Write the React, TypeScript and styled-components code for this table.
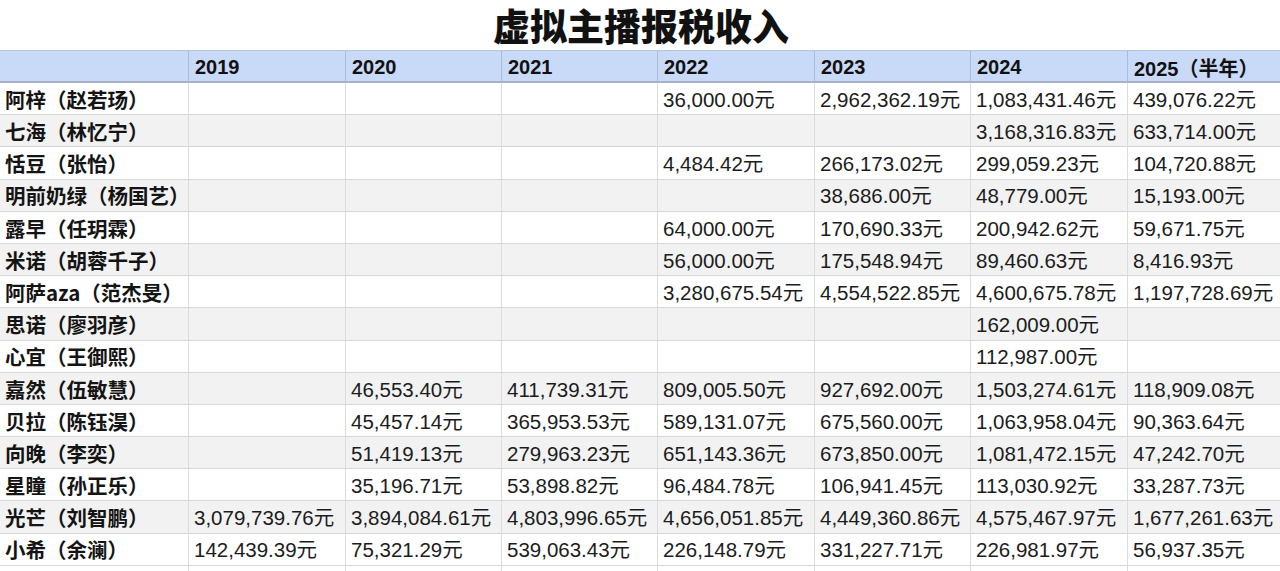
import React from 'react';
import styled, { createGlobalStyle } from 'styled-components';

const years = ['2019', '2020', '2021', '2022', '2023', '2024', '2025（半年）'];

const rows: Array<[string, string[]]> = [
	['阿梓（赵若玚）', ['', '', '', '36,000.00元', '2,962,362.19元', '1,083,431.46元', '439,076.22元']],
	['七海（林忆宁）', ['', '', '', '', '', '3,168,316.83元', '633,714.00元']],
	['恬豆（张怡）', ['', '', '', '4,484.42元', '266,173.02元', '299,059.23元', '104,720.88元']],
	['明前奶绿（杨国艺）', ['', '', '', '', '38,686.00元', '48,779.00元', '15,193.00元']],
	['露早（任玥霖）', ['', '', '', '64,000.00元', '170,690.33元', '200,942.62元', '59,671.75元']],
	['米诺（胡蓉千子）', ['', '', '', '56,000.00元', '175,548.94元', '89,460.63元', '8,416.93元']],
	['阿萨aza（范杰旻）', ['', '', '', '3,280,675.54元', '4,554,522.85元', '4,600,675.78元', '1,197,728.69元']],
	['思诺（廖羽彦）', ['', '', '', '', '', '162,009.00元', '']],
	['心宜（王御熙）', ['', '', '', '', '', '112,987.00元', '']],
	['嘉然（伍敏慧）', ['', '46,553.40元', '411,739.31元', '809,005.50元', '927,692.00元', '1,503,274.61元', '118,909.08元']],
	['贝拉（陈钰淏）', ['', '45,457.14元', '365,953.53元', '589,131.07元', '675,560.00元', '1,063,958.04元', '90,363.64元']],
	['向晚（李奕）', ['', '51,419.13元', '279,963.23元', '651,143.36元', '673,850.00元', '1,081,472.15元', '47,242.70元']],
	['星瞳（孙正乐）', ['', '35,196.71元', '53,898.82元', '96,484.78元', '106,941.45元', '113,030.92元', '33,287.73元']],
	['光芒（刘智鹏）', ['3,079,739.76元', '3,894,084.61元', '4,803,996.65元', '4,656,051.85元', '4,449,360.86元', '4,575,467.97元', '1,677,261.63元']],
	['小希（余澜）', ['142,439.39元', '75,321.29元', '539,063.43元', '226,148.79元', '331,227.71元', '226,981.97元', '56,937.35元']],
];

const App: React.FC = () => (
	<>
		<GlobalStyle />
		<Page>
			<Title>{'虚拟主播报税收入'}</Title>
			<Sheet>
				<HeaderRow>
					<HeaderCell />
					{years.map(y => <HeaderCell key={y}>{y}</HeaderCell>)}
				</HeaderRow>
				{rows.map(([name, values], i) => (
					<Row key={name} $shaded={i % 2 === 1}>
						<NameCell>{name}</NameCell>
						{values.map((v, j) => <ValueCell key={j}>{v}</ValueCell>)}
					</Row>
				))}
				<Row $shaded={false}>
					<NameCell />
					{years.map(y => <ValueCell key={y} />)}
				</Row>
			</Sheet>
		</Page>
	</>
);

const GlobalStyle = createGlobalStyle`
	html, body {
		margin: 0;
		padding: 0;
		background: #fff;
		overflow: hidden;
	}
`;

const Page = styled.div`
	width: 1280px;
	height: 571px;
	overflow: hidden;
	background: #fff;
	font-family: 'Liberation Sans', Arial, 'Noto Sans CJK SC', sans-serif;
	color: #1a1a1a;
`;

const Title = styled.h1`
	margin: 0;
	padding: 1px 0 1px 2px;
	text-align: center;
	line-height: 48px;
	font-family: 'Noto Sans CJK SC', sans-serif;
	font-size: 37px;
	font-weight: 900;
	color: #111;
`;

const Sheet = styled.div`
	display: flex;
	flex-direction: column;
	width: 1290px;
`;

const columns = '189px 157px 156px 156px 157px 156px 157px 157px';

const HeaderRow = styled.div`
	display: grid;
	grid-template-columns: ${columns};
	height: 33px;
	box-sizing: border-box;
	background: #c9daf8;
	border-top: 1px solid #b8c3d4;
	border-bottom: 2px solid #a4b3cc;
`;

const HeaderCell = styled.div`
	display: flex;
	align-items: center;
	padding: 2px 0 0 6px;
	box-sizing: border-box;
	border-right: 1px solid #a9bcdc;
	font-family: 'Liberation Sans', Arial, 'Noto Sans CJK SC', sans-serif;
	font-weight: 700;
	font-size: 20px;
	color: #111;
	white-space: nowrap;
`;

const Row = styled.div<{ $shaded: boolean }>`
	display: grid;
	grid-template-columns: ${columns};
	height: 32.2px;
	box-sizing: border-box;
	background: ${p => p.$shaded ? '#f2f2f2' : '#fff'};
	border-bottom: 1px solid #d6d6d6;
`;

const NameCell = styled.div`
	display: flex;
	align-items: center;
	padding: 1px 0 0 5px;
	box-sizing: border-box;
	border-right: 1px solid #dcdcdc;
	font-family: 'Noto Sans CJK SC', sans-serif;
	font-weight: 700;
	font-size: 20.5px;
	line-height: 1;
	color: #141414;
	white-space: nowrap;
	overflow: hidden;
`;

const ValueCell = styled.div`
	display: flex;
	align-items: center;
	padding: 3px 0 0 5px;
	box-sizing: border-box;
	border-right: 1px solid #dcdcdc;
	font-family: 'Liberation Sans', Arial, 'Noto Sans CJK SC', sans-serif;
	font-size: 20.5px;
	line-height: 1;
	color: #1c1c1c;
	white-space: nowrap;
	overflow: hidden;
`;

export default App;
